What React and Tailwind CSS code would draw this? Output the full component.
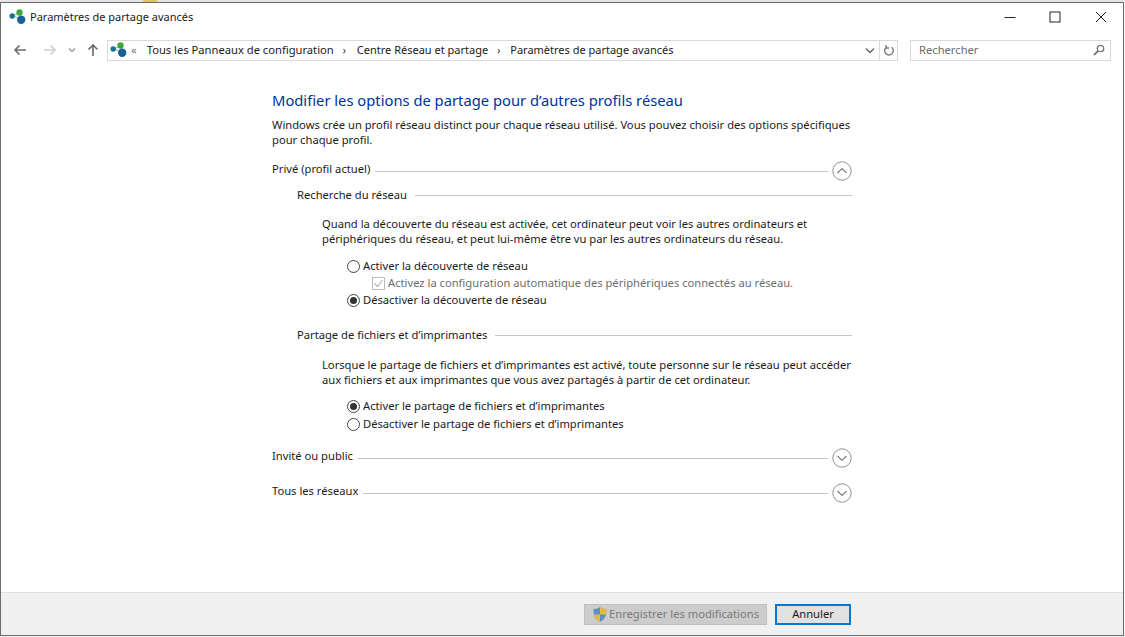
const font = { fontFamily: '"Noto Sans", sans-serif' };

function NetIcon() {
  return (
    <svg width="18" height="16" viewBox="0 0 18 16" className="shrink-0">
      <path d="M4 7 L10 4 M4 7 L12 10" stroke="#8fbccb" strokeWidth="1" />
      <circle cx="3.2" cy="7" r="2.7" fill="#17708f" />
      <circle cx="10.5" cy="3.5" r="3.2" fill="#3fa83a" />
      <circle cx="12.2" cy="10.8" r="4.2" fill="#17609c" />
    </svg>
  );
}

function Chevron({ up }) {
  return (
    <svg width="20" height="20" viewBox="0 0 20 20" className="shrink-0 ml-[4px]">
      <circle cx="10" cy="10" r="9.2" fill="white" stroke="#8f8f8f" strokeWidth="1" />
      <path d={up ? "M5.5 12 L10 7.5 L14.5 12" : "M5.5 8 L10 12.5 L14.5 8"} fill="none" stroke="#7d7d7d" strokeWidth="1.2" />
    </svg>
  );
}

function Radio({ on, label }) {
  return (
    <div className="flex items-center h-[17px] text-[11.2px] text-[#1a1a1a]">
      <span className="w-[13px] h-[13px] mr-[3px] rounded-full border border-[#444] bg-white flex items-center justify-center shrink-0">
        {on && <span className="w-[7px] h-[7px] rounded-full bg-[#333]" />}
      </span>
      <span>{label}</span>
    </div>
  );
}

function SectionHead({ title, up }) {
  return (
    <div className="flex items-center h-[20px] text-[11.2px] text-[#1a1a1a]">
      <span className="mr-[5px] -mt-[4px]">{title}</span>
      <span className="flex-1 h-px bg-[#c4c4c4]" />
      <Chevron up={up} />
    </div>
  );
}

function SubHead({ title }) {
  return (
    <div className="flex items-center h-[16px] text-[11.2px] text-[#1a1a1a]">
      <span className="mr-[8px]">{title}</span>
      <span className="flex-1 h-px bg-[#c4c4c4]" />
    </div>
  );
}

export default function App() {
  return (
    <div className="w-[1125px] h-[637px] bg-[#f4f4f4] flex flex-col overflow-hidden" style={font}>
      {/* bande du bureau derriere la fenetre */}
      <div className="h-[2px] bg-[#e4e4e4] shrink-0 pl-[143px]">
        <div className="w-[14px] h-full bg-[#e3c65a]" />
      </div>

      <div className="flex-1 flex flex-col bg-white border border-[#6b6b6b] mr-[1px] mb-[1px] min-h-0">
        {/* barre de titre */}
        <div className="h-[28px] flex items-center pl-[8px] shrink-0">
          <NetIcon />
          <span className="ml-[3px] text-[11px] text-[#1a1a1a]">Paramètres de partage avancés</span>
          <div className="ml-auto flex items-center h-full">
            <svg width="12" height="12" viewBox="0 0 12 12" className="mr-[33px]"><path d="M0.5 6.5H11.5" stroke="#222" /></svg>
            <svg width="12" height="12" viewBox="0 0 12 12" className="mr-[34px]"><rect x="1" y="1" width="10" height="10" fill="none" stroke="#222" /></svg>
            <svg width="12" height="12" viewBox="0 0 12 12" className="mr-[16px]"><path d="M1 1L11 11M11 1L1 11" stroke="#222" /></svg>
          </div>
        </div>

        {/* barre d'adresse */}
        <div className="h-[34px] flex items-center shrink-0 pt-[4px]">
          <div className="w-[106px] flex items-center pl-[12px] shrink-0">
            <svg width="14" height="12" viewBox="0 0 14 12"><path d="M13 6H2M6.5 1.5L2 6l4.5 4.5" fill="none" stroke="#6b6b6b" strokeWidth="1.6" /></svg>
            <svg width="14" height="12" viewBox="0 0 14 12" className="ml-[16px]"><path d="M1 6h11M7.5 1.5L12 6l-4.5 4.5" fill="none" stroke="#cfcfcf" strokeWidth="1.6" /></svg>
            <svg width="8" height="6" viewBox="0 0 8 6" className="ml-[11px]"><path d="M1 1.5L4 4.5L7 1.5" fill="none" stroke="#9a9a9a" strokeWidth="1.3" /></svg>
            <svg width="12" height="14" viewBox="0 0 12 14" className="ml-[11px]"><path d="M6 13V2M1.5 6.5L6 2l4.5 4.5" fill="none" stroke="#6b6b6b" strokeWidth="1.6" /></svg>
          </div>
          <div className="w-[791px] h-[21px] border border-[#d9d9d9] flex items-center text-[11.2px] text-[#1a1a1a] shrink-0">
            <span className="ml-[2px]"><NetIcon /></span>
            <span className="ml-[3px] text-[#777]">«</span>
            <span className="ml-[10px]">Tous les Panneaux de configuration</span>
            <span className="ml-[9px] text-[10px]">›</span>
            <span className="ml-[11px] text-[11px]">Centre Réseau et partage</span>
            <span className="ml-[9px] text-[10px]">›</span>
            <span className="ml-[10px] text-[11px]">Paramètres de partage avancés</span>
            <svg width="10" height="7" viewBox="0 0 10 7" className="ml-auto mr-[4px]"><path d="M1 1.5L5 5.5L9 1.5" fill="none" stroke="#666" strokeWidth="1.4" /></svg>
            <span className="w-[18px] h-full border-l border-[#d9d9d9] flex items-center justify-center">
              <svg width="12" height="13" viewBox="0 0 12 13"><path d="M3 3.5A4.3 4.3 0 1 0 8.5 3.2M3 1v3h3" fill="none" stroke="#777" strokeWidth="1.4" /></svg>
            </span>
          </div>
          <div className="ml-[12px] w-[201px] h-[21px] border border-[#d9d9d9] flex items-center pl-[8px] pr-[5px] text-[11.2px] text-[#6d6d6d] shrink-0">
            <span>Rechercher</span>
            <svg width="12" height="12" viewBox="0 0 12 12" className="ml-auto"><circle cx="7.5" cy="4.5" r="3.2" fill="none" stroke="#777" strokeWidth="1.3" /><path d="M5 7L1 11" stroke="#777" strokeWidth="1.8" /></svg>
          </div>
        </div>

        {/* contenu */}
        <div className="flex-1 min-h-0 pl-[271px] pt-[25px]">
          <div className="w-[580px]">
            <h1 className="text-[14.75px] leading-[20px] text-[#003399]">Modifier les options de partage pour d’autres profils réseau</h1>
            <p className="mt-[7px] text-[11.2px] leading-[15px] text-[#1a1a1a]">
              Windows crée un profil réseau distinct pour chaque réseau utilisé. Vous pouvez choisir des options spécifiques pour chaque profil.
            </p>
            <div className="mt-[14px]"><SectionHead title="Privé (profil actuel)" up /></div>

            <div className="pl-[25px] mt-[6px]">
              <SubHead title="Recherche du réseau" />
              <div className="pl-[25px] mt-[13px]">
                <p className="text-[11.2px] leading-[15px] text-[#1a1a1a]">
                  Quand la découverte du réseau est activée, cet ordinateur peut voir les autres ordinateurs et périphériques du réseau, et peut lui-même être vu par les autres ordinateurs du réseau.
                </p>
                <div className="pl-[25px] mt-[12px]">
                  <Radio label="Activer la découverte de réseau" />
                  <div className="flex items-center h-[17px] pl-[25px] text-[11.2px] text-[#6d6d6d]">
                    <span className="w-[13px] h-[13px] mr-[3px] border border-[#bbb] flex items-center justify-center shrink-0">
                      <svg width="11" height="11" viewBox="0 0 11 11"><path d="M1.5 5.5L4.5 8.5L9.5 2" fill="none" stroke="#b5b5b5" strokeWidth="1.2" /></svg>
                    </span>
                    <span>Activez la configuration automatique des périphériques connectés au réseau.</span>
                  </div>
                  <Radio on label="Désactiver la découverte de réseau" />
                </div>
              </div>

              <div className="mt-[18px]"><SubHead title="Partage de fichiers et d’imprimantes" /></div>
              <div className="pl-[25px] mt-[14px]">
                <p className="text-[11.2px] leading-[15px] text-[#1a1a1a]">
                  Lorsque le partage de fichiers et d’imprimantes est activé, toute personne sur le réseau peut accéder aux fichiers et aux imprimantes que vous avez partagés à partir de cet ordinateur.
                </p>
                <div className="pl-[25px] mt-[11px]">
                  <Radio on label="Activer le partage de fichiers et d’imprimantes" />
                  <div className="h-px" />
                  <Radio label="Désactiver le partage de fichiers et d’imprimantes" />
                </div>
              </div>
            </div>

            <div className="mt-[15px]"><SectionHead title="Invité ou public" /></div>
            <div className="mt-[15px]"><SectionHead title="Tous les réseaux" /></div>
          </div>
        </div>

        {/* boutons */}
        <div className="h-[43px] shrink-0 bg-[#f0f0f0] border-t border-[#dfdfdf] flex items-center justify-end pr-[272px]">
          <div className="w-[183px] h-[21px] bg-[#cccccc] border border-[#bfbfbf] flex items-center pl-[7px] text-[11.2px] text-[#7a7a7a] whitespace-nowrap">
            <svg width="16" height="17" viewBox="0 0 16 17" className="shrink-0">
              <path d="M8 1C6 2.5 4 3 1.5 3c0 6 1 10 6.5 13 5.5-3 6.5-7 6.5-13C12 3 10 2.5 8 1z" fill="#5b8fc7" />
              <path d="M8 1c2 1.5 4 2 6.5 2 0 2-.1 3.900-.6 5.500H8z M8 8.500V16C4.500 14 2.800 11.500 2.100 8.500z" fill="#e9bb3c" />
            </svg>
            <span className="ml-px">Enregistrer les modifications</span>
          </div>
          <div className="ml-[8px] w-[76px] h-[21px] bg-[#e1e1e1] border-2 border-[#0078d7] flex items-center justify-center text-[11.2px] text-[#1a1a1a]">Annuler</div>
        </div>
      </div>
    </div>
  );
}
